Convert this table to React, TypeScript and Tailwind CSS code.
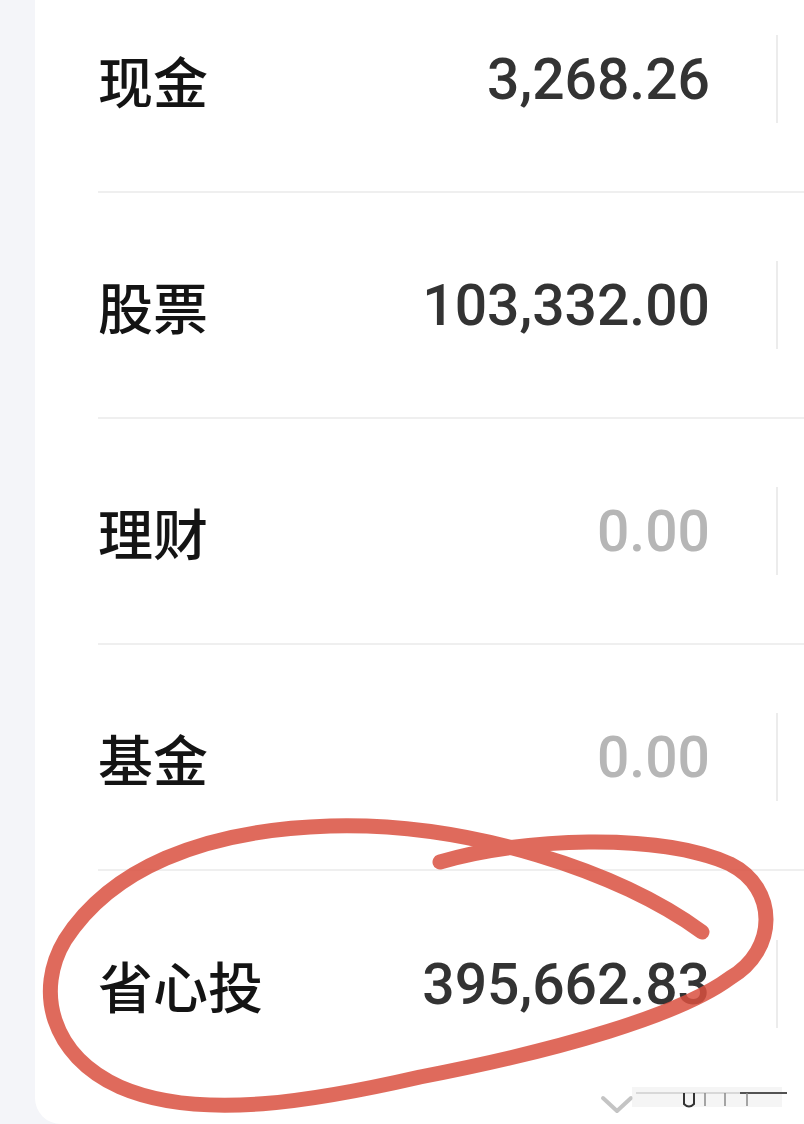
import React from "react";

const rows = [
  { label: "现金", value: "3,268.26", muted: false },
  { label: "股票", value: "103,332.00", muted: false },
  { label: "理财", value: "0.00", muted: true },
  { label: "基金", value: "0.00", muted: true },
  { label: "省心投", value: "395,662.83", muted: false },
];

export default function App() {
  return (
    <div className="relative w-[804px] h-[1124px] overflow-hidden bg-[#f4f5f9] flex">
      <div className="w-[35px] shrink-0" />
      <div className="flex-1 h-[1124px] bg-white rounded-bl-[26px] overflow-hidden">
        <div className="-mt-[33px] pl-[63px]">
          {rows.map((r, i) => (
            <div
              key={r.label}
              className={
                "h-[226px] flex items-center " +
                (i < rows.length - 1 ? "border-b-2 border-[#efefef]" : "")
              }
            >
              <div
                className="flex-1 text-[55px] leading-none font-medium text-[#141414]"
                style={{ fontFamily: '"Noto Sans CJK SC", "Noto Sans", sans-serif' }}
              >
                {r.label}
              </div>
              <div
                className={
                  "text-[57px] leading-none font-medium " +
                  (r.muted ? "text-[#b6b6b6]" : "text-[#333333]")
                }
                style={{ fontFamily: 'Roboto, "Noto Sans", sans-serif' }}
              >
                {r.value}
              </div>
              <div className="w-[66px] shrink-0" />
              <div className="w-[2px] h-[88px] bg-[#ececec] shrink-0" />
              <div className="w-[26px] shrink-0" />
            </div>
          ))}
        </div>
      </div>

      {/* watermark + chevron */}
      <svg
        className="absolute left-0 top-0 pointer-events-none"
        width="804"
        height="1124"
        viewBox="0 0 804 1124"
      >
        <path d="M603 1098 L617 1111 L631 1098" fill="none" stroke="#c4c4c4" strokeWidth="4" strokeLinecap="round" strokeLinejoin="round" />
        <rect x="632" y="1087" width="150" height="20" fill="#eeeeee" opacity="0.6" />
        <path d="M636 1093 L787 1093" stroke="#d8d8d8" strokeWidth="2" />
        <path d="M740 1093 L787 1093" stroke="#333" strokeWidth="2" opacity="0.8" />
        <path d="M684 1093 L684 1104 Q689 1109 694 1104 L694 1093" fill="none" stroke="#333" strokeWidth="2" />
        <path d="M705 1093 L705 1106" stroke="#888" strokeWidth="1.5" />
        <path d="M725 1093 L725 1106" stroke="#888" strokeWidth="1.5" />
        <path d="M747 1093 L747 1106" stroke="#888" strokeWidth="1.5" />
      </svg>

      {/* red hand-drawn circle */}
      <svg
        className="absolute left-0 top-0 pointer-events-none"
        width="804"
        height="1124"
        viewBox="0 0 804 1124"
      >
        <path
          d="M440 862 C 520 838, 660 832, 730 864 C 778 888, 778 950, 730 978 C 680 1015, 560 1050, 420 1077 C 320 1100, 200 1122, 120 1087 C 50 1055, 35 990, 65 940 C 110 870, 200 830, 330 826 C 470 822, 620 872, 702 932"
          fill="none"
          stroke="#d9503f"
          strokeOpacity="0.85"
          strokeWidth="15"
          strokeLinecap="round"
          strokeLinejoin="round"
        />
      </svg>
    </div>
  );
}
